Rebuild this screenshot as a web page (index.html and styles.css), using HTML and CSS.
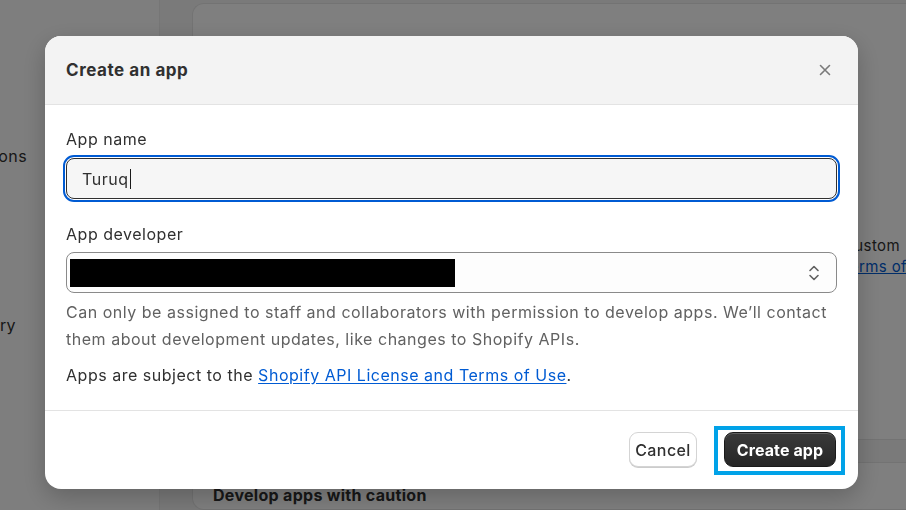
FILE: index.html
```html
<!DOCTYPE html>
<html lang="en">
<head>
<meta charset="utf-8">
<title>Create an app</title>
<link rel="stylesheet" href="styles.css">
</head>
<body>
<div class="page">
  <aside class="sidebar">
    <div class="nav-item nav-top"><span>Notifications</span></div>
    <div class="nav-item nav-low"><span>Inventory</span></div>
  </aside>
  <main class="main">
    <section class="card card-top">
      <p class="bg-line bg-line1"><span>apps, including custom</span></p>
      <p class="bg-line bg-line2"><a href="#">API License and Terms of</a></p>
    </section>
    <section class="card card-bottom">
      <h3 class="bg-heading">Develop apps with caution</h3>
    </section>
  </main>
</div>

<div class="overlay"></div>

<div class="modal" role="dialog" aria-labelledby="modal-title">
  <header class="modal-header">
    <h2 id="modal-title" class="modal-title">Create an app</h2>
    <button class="close-btn" aria-label="Close">
      <svg width="12" height="12" viewBox="0 0 12 12"><path d="M1.5 1.5 L10.5 10.5 M10.5 1.5 L1.5 10.5" stroke="#7a7a7a" stroke-width="1.6" stroke-linecap="round" fill="none"/></svg>
    </button>
  </header>
  <div class="modal-body">
    <label class="field-label">App name</label>
    <div class="text-input focused"><span class="input-value">Turuq</span><span class="caret"></span></div>

    <label class="field-label label-dev">App developer</label>
    <div class="select">
      <span class="redacted"></span>
      <svg class="select-icon" width="12" height="18" viewBox="0 0 12 18"><path d="M2 6.5 L6 2.5 L10 6.5 M2 11.5 L6 15.5 L10 11.5" stroke="#616161" stroke-width="1.6" stroke-linecap="round" stroke-linejoin="round" fill="none"/></svg>
    </div>
    <p class="help">Can only be assigned to staff and collaborators with permission to develop apps. We’ll contact them about development updates, like changes to Shopify APIs.</p>
    <p class="terms">Apps are subject to the <a href="#">Shopify API License and Terms of Use</a>.</p>
  </div>
  <footer class="modal-footer">
    <button class="btn btn-secondary">Cancel</button>
    <button class="btn btn-primary highlighted">Create app</button>
  </footer>
</div>
</body>
</html>
```

FILE: styles.css
```css
* { box-sizing: border-box; }
html, body { margin: 0; padding: 0; }
body {
  width: 906px;
  height: 510px;
  overflow: hidden;
  font-family: Inter, "Noto Sans", "Liberation Sans", sans-serif;
  color: #303030;
  background: #f4f4f4;
  position: relative;
}

/* background page */
.page { display: flex; height: 510px; }
.sidebar {
  width: 160px;
  flex: none;
  background: #fdfdfd;
  border-right: 1px solid #ececec;
  padding-top: 145px;
}
.nav-item {
  width: 27px;
  display: flex;
  justify-content: flex-end;
  white-space: nowrap;
  font-size: 16px;
  line-height: 22px;
  letter-spacing: 0.4px;
  color: #303030;
}
.nav-low { margin-top: 147px; width: 16px; }
.main {
  flex: 1;
  padding: 3px 0 0 32px;
  display: flex;
  flex-direction: column;
  gap: 22px;
  overflow: hidden;
}
.card {
  background: #ffffff;
  border-radius: 12px 0 0 12px;
  border: 1px solid #e6e6e6;
  border-right: none;
  width: 760px;
  flex: none;
}
.card-top { height: 437px; padding-top: 231px; }
.bg-line {
  margin: 0;
  font-size: 15px;
  line-height: 21px;
  letter-spacing: 0.4px;
  white-space: nowrap;
  display: flex;
  justify-content: flex-end;
}
.bg-line1 { width: 707px; }
.bg-line2 { width: 714px; }
.bg-line a { color: #005bd3; }
.card-bottom { flex: 1; padding: 22px 0 0 20px; }
.bg-heading { margin: 0; font-size: 16px; font-weight: 650; line-height: 20px; letter-spacing: 0.3px; }

.overlay {
  position: fixed;
  inset: 0;
  background: rgba(0, 0, 0, 0.5);
}

/* modal */
.modal {
  position: fixed;
  left: 45px;
  top: 36px;
  width: 813px;
  height: 453px;
  background: #ffffff;
  border-radius: 16px;
  box-shadow: 0 8px 24px rgba(0,0,0,0.22);
  display: flex;
  flex-direction: column;
}
.modal-header {
  height: 69px;
  flex: none;
  background: #f3f3f3;
  border-bottom: 1px solid #e3e3e3;
  border-radius: 16px 16px 0 0;
  display: flex;
  align-items: center;
  justify-content: space-between;
  padding: 0 27px 0 21px;
}
.modal-title {
  margin: 0;
  font-size: 17px;
  font-weight: 650;
  line-height: 22px;
  color: #303030;
  letter-spacing: 0.55px;
}
.close-btn {
  border: none;
  background: none;
  padding: 0;
  width: 12px;
  height: 12px;
  display: flex;
}

.modal-body {
  padding: 23px 21px 21px 21px;
  flex: none;
  border-bottom: 1px solid #e3e3e3;
  letter-spacing: 0.52px;
}
.field-label {
  display: block;
  font-size: 16px;
  line-height: 22px;
  color: #303030;
}
.label-dev { margin-top: 24px; }
.text-input {
  margin-top: 8px;
  height: 41px;
  border: 1px solid #303030;
  border-radius: 8px;
  background: #f6f6f6;
  display: flex;
  align-items: center;
  padding-left: 15px;
  font-size: 16px;
  color: #303030;
}
.text-input.focused {
  outline: 2px solid #005bd3;
  outline-offset: 1px;
}
.caret {
  width: 1.5px;
  height: 20px;
  background: #1a1a1a;
  margin-left: 1px;
}
.select {
  margin-top: 7px;
  height: 41px;
  border: 1px solid #8a8a8a;
  border-radius: 8px;
  background: #fdfdfd;
  display: flex;
  align-items: center;
  justify-content: space-between;
  padding: 0 16px 0 3px;
}
.redacted {
  width: 385px;
  height: 28px;
  background: #000000;
}
.help {
  margin: 6px 0 0 0;
  font-size: 16px;
  line-height: 27px;
  color: #616161;
}
.terms {
  margin: 9px 0 0 0;
  font-size: 16px;
  line-height: 27px;
  color: #303030;
}
.terms a { color: #005bd3; text-decoration: underline; text-underline-offset: 2px; }

.modal-footer {
  flex: 1;
  display: flex;
  align-items: center;
  justify-content: flex-end;
  gap: 27px;
  padding: 0 22px 1px 21px;
  border-radius: 0 0 16px 16px;
}
.btn {
  font-family: inherit;
  font-size: 16px;
  font-weight: 500;
  letter-spacing: 0.4px;
  border-radius: 9px;
  height: 35px;
  padding: 0;
  cursor: pointer;
}
.btn-secondary {
  width: 68px;
  background: #ffffff;
  color: #303030;
  border: 1px solid #d4d4d4;
  box-shadow: 0 1px 0 #cccccc;
}
.btn-primary {
  width: 112px;
  background: linear-gradient(#3a3a3a, #262626);
  color: #ffffff;
  font-weight: 650;
  letter-spacing: 0.1px;
  border: 1px solid #1a1a1a;
  box-shadow: inset 0 1px 0 rgba(255,255,255,0.2);
}
.highlighted { position: relative; }
.highlighted::after {
  content: "";
  position: absolute;
  top: -7px;
  left: -11px;
  right: -10px;
  bottom: -9px;
  border: 4px solid #00a2e8;
  pointer-events: none;
}
```
